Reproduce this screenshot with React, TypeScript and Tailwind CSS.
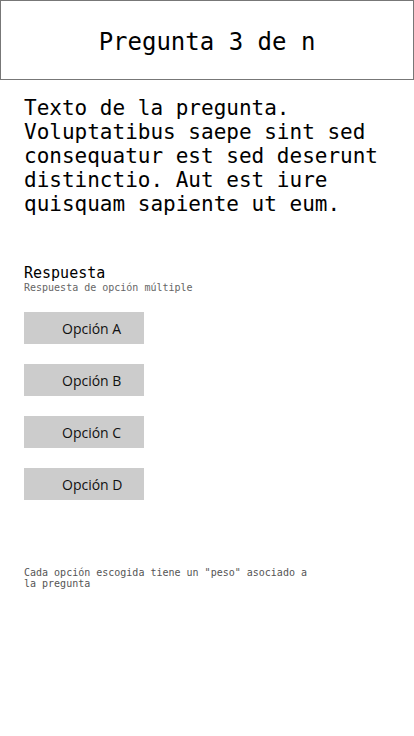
export default function App() {
  const mono = { fontFamily: '"DejaVu Sans Mono", monospace' };
  const opts = ["Opción A", "Opción B", "Opción C", "Opción D"];
  return (
    <div className="w-[414px] h-[736px] bg-white text-black" style={mono}>
      <div className="h-[80px] pt-[3px] border border-[#777] flex items-center justify-center text-[24px] leading-none">
        Pregunta 3 de n
      </div>
      <p className="mt-4 px-6 text-[21px] leading-[24px]">
        Texto de la pregunta. Voluptatibus saepe sint sed consequatur est sed deserunt distinctio. Aut est iure quisquam sapiente ut eum.
      </p>
      <div className="mt-[49px] px-6">
        <div className="text-[15px] leading-[17px]">Respuesta</div>
        <div className="text-[10px] leading-[12px] text-[#666]">Respuesta de opción múltiple</div>
      </div>
      <div className="mt-[18px] px-6 flex flex-col gap-5">
        {opts.map((o) => (
          <div
            key={o}
            className="w-[120px] h-[32px] bg-[#cccccc] flex items-center pl-[38px] text-[14px] text-[#111]"
            style={{ fontFamily: '"Open Sans", sans-serif' }}
          >
            {o}
          </div>
        ))}
      </div>
      <p className="mt-[67px] px-6 w-[340px] text-[10px] leading-[11px] text-[#555]">
        Cada opción escogida tiene un "peso" asociado a la pregunta
      </p>
    </div>
  );
}
